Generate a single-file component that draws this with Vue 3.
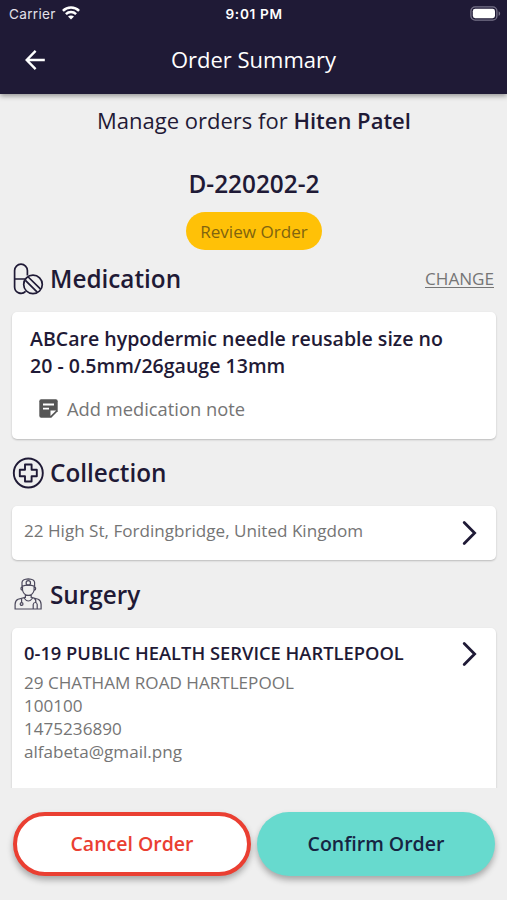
<script setup>
const surgeryLines = ['29 CHATHAM ROAD HARTLEPOOL', '100100', '1475236890', 'alfabeta@gmail.png']
</script>

<template>
  <div class="screen">
    <header class="header">
      <div class="status">
        <div class="carrier">
          <span>Carrier</span>
          <svg class="wifi" width="18" height="14" viewBox="0 0 18 14" fill="none" stroke="#fff" stroke-width="2.5">
            <path d="M.9 4.9C5.4.4 12.6.4 17.1 4.9" />
            <path d="M3.9 8.2C6.8 5.4 11.2 5.4 14.1 8.2" />
            <path d="M9 13.6 6 10.6C7.6 9.1 10.4 9.1 12 10.6Z" fill="#fff" stroke="none" />
          </svg>
        </div>
        <span class="time">9:01 PM</span>
        <svg class="battery" width="31" height="15" viewBox="0 0 31 15">
          <rect x=".9" y=".9" width="26" height="13.2" rx="4.2" fill="none" stroke="#777389" stroke-width="1.3" />
          <rect x="2.8" y="2.8" width="22.2" height="9.4" rx="2.4" fill="#fff" />
          <path d="M28.6 5.2C30.6 6 30.6 9 28.6 9.8Z" fill="#777389" />
        </svg>
      </div>
      <div class="bar">
        <svg class="back" width="20" height="20" viewBox="0 0 20 20" fill="none" stroke="#fff" stroke-width="2.4">
          <path d="M10.6 .9 1.7 10l8.9 9.1M1.7 10H19.8" />
        </svg>
        <h1>Order Summary</h1>
      </div>
    </header>

    <main class="content">
      <p class="manage">Manage orders for <b>Hiten Patel</b></p>
      <p class="number">D-220202-2</p>
      <span class="pill">Review Order</span>

      <section class="medication">
        <div class="heading">
          <svg class="icon" width="32" height="32" viewBox="0 0 32 32" fill="none" stroke="#1f1a36" stroke-width="1.7">
            <path d="M15.4 12.6V7.6a6.4 6.4 0 0 0-12.8 0v16.4a6.4 6.4 0 0 0 11 4.4M2.6 16H13.4" />
            <circle cx="21" cy="21.4" r="9.3" />
            <path d="M13.4 17.4 25.2 29.2M16.2 14 28.6 26.2" />
          </svg>
          <h2>Medication</h2>
          <a class="change">CHANGE</a>
        </div>
        <div class="card med-card">
          <p class="strong">ABCare hypodermic needle reusable size no<br>20 - 0.5mm/26gauge 13mm</p>
          <div class="note">
            <svg width="19" height="19" viewBox="0 0 19 19">
              <path d="M2.2.3H16.8Q18.7.3 18.7 2.2V12.3L12.3 18.7H2.2Q.3 18.7.3 16.8V2.2Q.3.3 2.2.3Z" fill="#555" />
              <path d="M4 5.5H15M4 9.6H10" stroke="#fff" stroke-width="1.8" />
              <path d="M11.5 17.1V11.5H17.1Z" fill="#fff" />
            </svg>
            <span>Add medication note</span>
          </div>
        </div>
      </section>

      <section class="collection">
        <div class="heading">
          <svg class="icon" width="32" height="32" viewBox="0 0 32 32" fill="none" stroke="#1f1a36">
            <circle cx="16.3" cy="16" r="14.5" stroke-width="1.9" />
            <path d="M13 7.5h6.6v5.2h5.2v6.6h-5.2v5.2h-6.6v-5.2h-5.2v-6.6H13Z" stroke-width="1.9" stroke-linejoin="round" />
          </svg>
          <h2>Collection</h2>
        </div>
        <div class="card row-card">
          <span>22 High St, Fordingbridge, United Kingdom</span>
          <svg class="chevron" width="16" height="26" viewBox="0 0 16 26"><path d="M2.2 2.6 12.6 13 2.2 23.4" /></svg>
        </div>
      </section>

      <section class="surgery">
        <div class="heading">
          <svg class="icon" width="32" height="32" viewBox="0 0 32 32" fill="none" stroke="#4b485c" stroke-width="1.2">
            <path d="M10 8.2V4.4Q10.2 1.2 16.3.9 22.4 1.2 22.6 4.4V8.2Q16.3 6 10 8.2Z" />
            <circle cx="16.3" cy="4.9" r="2.2" />
            <path d="M10.5 8.3V12Q11.4 17.2 16.3 17.4 21.2 17.2 22.1 12V8.3M10.3 9.2Q8.4 9.3 9.2 11.6L10.7 12.4M22.3 9.2Q24.2 9.3 23.4 11.6L21.9 12.4M13.4 16.8V20M19.2 20V16.8" />
            <path d="M13.2 19.4 6 21.2Q3.3 22.4 3.1 26.2V31H29.1V26.2Q28.9 22.4 26.2 21.2L19.4 19.4M9.6 20.7V24.6M21.9 20.3Q24.2 21.5 23.8 24.3M21.2 30.8V26.5Q21.4 24.5 23.2 24.5 25 24.5 25.2 26.5V30.8M12 20Q16.3 26 20.7 20" />
            <circle cx="9.6" cy="26" r="1.4" />
          </svg>
          <h2>Surgery</h2>
        </div>
        <div class="card surgery-card">
          <div>
            <p class="name">0-19 PUBLIC HEALTH SERVICE HARTLEPOOL</p>
            <p v-for="line in surgeryLines" :key="line" class="line">{{ line }}</p>
          </div>
          <svg class="chevron" width="16" height="26" viewBox="0 0 16 26"><path d="M2.2 2.6 12.6 13 2.2 23.4" /></svg>
        </div>
      </section>
    </main>

    <footer class="actions">
      <button class="btn cancel">Cancel Order</button>
      <button class="btn confirm">Confirm Order</button>
    </footer>
  </div>
</template>

<style>
body { background: #efefef; }
</style>

<style scoped>
* { box-sizing: border-box; }
p, h1, h2 { margin: 0; font-weight: 400; }
.screen {
  height: 900px;
  display: flex;
  flex-direction: column;
  overflow: hidden;
  background: #efefef;
  color: #1f1a36;
  font-family: "Open Sans", sans-serif;
}
.header {
  height: 93.5px;
  flex: none;
  background: #1f1a36;
  color: #fff;
  box-shadow: 0 2px 5px rgba(0, 0, 0, .38);
}
.status {
  height: 28px;
  display: grid;
  grid-template-columns: 1fr auto 1fr;
  align-items: center;
  padding: 0 7px 0 9px;
  font: 13.6px/28px Inter, sans-serif;
}
.carrier { display: flex; align-items: center; gap: 6px; letter-spacing: .3px; color: #e3e1ea; }
.wifi { margin-bottom: 2px; }
.time { font-weight: 600; font-size: 13.6px; letter-spacing: .7px; margin-right: .7px; }
.battery { justify-self: end; margin: 0 -1px 2px 0; }
.bar {
  height: 63px;
  display: grid;
  grid-template-columns: 1fr auto 1fr;
  align-items: center;
}
.back { margin-left: 25px; }
h1 { font-size: 22px; line-height: 30px; margin-top: -2px; }
.content {
  height: 694.5px;
  flex: none;
  overflow: hidden;
  display: flex;
  flex-direction: column;
  align-items: center;
  padding: 11.5px 11px 0 12px;
}
.manage { font-size: 22px; line-height: 30px; }
.manage b { font-weight: 600; }
.number { margin-top: 32.5px; font-size: 24.35px; line-height: 32px; font-weight: 600; }
.pill {
  margin-top: 12px;
  width: 136px;
  height: 38px;
  flex: none;
  border-radius: 19px;
  background: #ffc107;
  color: #80640f;
  font-size: 17.1px;
  line-height: 39px;
  text-align: center;
}
section { width: 100%; flex: none; }
.medication { margin-top: 12px; }
.collection { margin-top: 17px; }
.surgery { margin-top: 17px; }
.heading { display: flex; align-items: center; height: 34px; }
.icon { flex: none; margin-right: 6px; }
h2 { font-size: 24.3px; line-height: 34px; font-weight: 600; margin-top: 1px; }
.change {
  margin-left: auto;
  margin-right: 2px;
  font-size: 17.1px;
  line-height: 24px;
  color: #757575;
  text-decoration: underline;
  text-decoration-thickness: 1px;
  text-underline-offset: 2px;
}
.card {
  background: #fff;
  border-radius: 5px;
  box-shadow: 0 1px 2px rgba(0, 0, 0, .22);
}
.med-card { height: 127px; margin-top: 16px; padding: 13px 18px 0; }
.strong { font-size: 19.56px; line-height: 27px; font-weight: 600; white-space: nowrap; }
.note {
  display: flex;
  align-items: center;
  gap: 9px;
  margin: 17px 0 0 9px;
  font-size: 18.32px;
  line-height: 26px;
  color: #757575;
}
.row-card {
  height: 54px;
  margin-top: 16.5px;
  display: flex;
  justify-content: space-between;
  align-items: center;
  padding: 0 18px 0 12px;
  font-size: 17.1px;
  color: #757575;
}
.row-card span { margin-top: -5px; }
.chevron { flex: none; fill: none; stroke: #1f1a36; stroke-width: 2.8; stroke-linecap: round; }
.surgery-card {
  height: 200px;
  margin-top: 17px;
  display: flex;
  justify-content: space-between;
  align-items: flex-start;
  padding: 13px 18px 0 12px;
}
.name { font-size: 18.34px; line-height: 24px; font-weight: 600; margin-bottom: 6px; white-space: nowrap; }
.line { font-size: 17.1px; line-height: 23.1px; color: #757575; }
.actions { display: grid; grid-template-columns: 1fr 1fr; gap: 6px; padding: 24px 12px 0 13px; }
.btn {
  height: 64px;
  border: 0;
  border-radius: 32px;
  padding: 0 0 1px;
  font: 600 19.5px/27px "Open Sans", sans-serif;
  box-shadow: 0 4px 6px rgba(0, 0, 0, .3);
}
.cancel { background: #fff; border: 4px solid #ea3f32; color: #ea3f32; }
.confirm { background: #67dace; color: #162442; }
</style>
